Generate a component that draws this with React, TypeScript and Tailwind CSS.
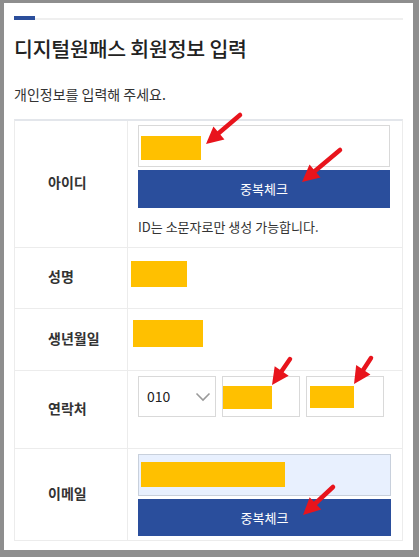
import React from "react";

type Pt = [number, number];

function Arrow({ tail, tip }: { tail: Pt; tip: Pt }) {
  const dx = tip[0] - tail[0];
  const dy = tip[1] - tail[1];
  const len = Math.sqrt(dx * dx + dy * dy);
  const ux = dx / len;
  const uy = dy / len;
  const headLen = 17;
  const halfW = 8.5;
  const bx = tip[0] - ux * headLen;
  const by = tip[1] - uy * headLen;
  const px = -uy;
  const py = ux;
  const p1 = `${tip[0]},${tip[1]}`;
  const p2 = `${bx + px * halfW},${by + py * halfW}`;
  const p3 = `${bx - px * halfW},${by - py * halfW}`;
  return (
    <g>
      <line
        x1={tail[0]}
        y1={tail[1]}
        x2={bx + ux * 2}
        y2={by + uy * 2}
        stroke="#e8141c"
        strokeWidth={4.5}
        strokeLinecap="round"
      />
      <polygon points={`${p1} ${p2} ${p3}`} fill="#e8141c" />
    </g>
  );
}

function Label({ children }: { children: React.ReactNode }) {
  return (
    <div className="flex items-center pl-[33px] pb-[3px] border-r border-[#ececec] text-[14px] font-bold text-[#333]">
      {children}
    </div>
  );
}

function Yellow({ className }: { className: string }) {
  return <div className={`bg-[#ffc000] ${className}`} />;
}

export default function App() {
  return (
    <div
      className="relative w-[419px] h-[557px] bg-[#8e8e8e] pt-[3px] pl-[4px] overflow-hidden"
      style={{ fontFamily: '"Noto Sans CJK KR", "Noto Sans", sans-serif' }}
    >
      <div className="w-[409px] h-[547px] bg-white px-[10px] pt-[12px]">
        <div className="flex items-end h-[5px]">
          <div className="w-[21px] h-[4px] bg-[#2b4e9b]" />
          <div className="flex-1 h-[2px] bg-[#efefef]" />
        </div>
        <div className="mt-[14px] text-[20.5px] leading-[28px] font-medium text-[#222] tracking-[-0.2px]">
          디지털원패스 회원정보 입력
        </div>
        <div className="mt-[22px] text-[14px] leading-[20px] text-[#333]">
          개인정보를 입력해 주세요.
        </div>
        <div className="mt-[15px] border-t-2 border-t-[#e3e6eb] border-x border-x-[#ececec]">
          {/* 아이디 */}
          <div className="grid grid-cols-[113px_1fr] h-[127px] border-b border-[#ececec]">
            <Label>아이디</Label>
            <div className="pl-[10px] pr-[12px] pt-[4px]">
              <div className="h-[42px] border border-[#d9d9d9] pl-[2px] pt-[10px]">
                <Yellow className="w-[60px] h-[24px]" />
              </div>
              <div className="mt-[3px] h-[38px] bg-[#2a4e9c] flex items-center justify-center text-white text-[13px]">
                중복체크
              </div>
              <div className="mt-[9px] text-[13px] leading-[20px] text-[#333]">
                ID는 소문자로만 생성 가능합니다.
              </div>
            </div>
          </div>
          {/* 성명 */}
          <div className="grid grid-cols-[113px_1fr] h-[61px] border-b border-[#ececec]">
            <Label>성명</Label>
            <div className="pl-[3px] pt-[13px]">
              <Yellow className="w-[56px] h-[26px]" />
            </div>
          </div>
          {/* 생년월일 */}
          <div className="grid grid-cols-[113px_1fr] h-[62px] border-b border-[#ececec]">
            <Label>생년월일</Label>
            <div className="pl-[5px] pt-[11px]">
              <Yellow className="w-[70px] h-[27px]" />
            </div>
          </div>
          {/* 연락처 */}
          <div className="grid grid-cols-[113px_1fr] h-[78px] border-b border-[#ececec]">
            <Label>연락처</Label>
            <div className="pl-[10px] pt-[5px] flex gap-[6px] items-start">
              <div className="w-[78px] h-[41px] border border-[#d9d9d9] flex items-center justify-between pl-[8px] pr-[4px]">
                <span className="text-[14px] text-[#222]">010</span>
                <svg width="16" height="10" viewBox="0 0 16 10" fill="none">
                  <path d="M1.5 1.5 L8 8 L14.5 1.5" stroke="#9a9a9a" strokeWidth="1.6" />
                </svg>
              </div>
              <div className="w-[78px] h-[41px] border border-[#d9d9d9] pt-[9px]">
                <Yellow className="w-[49px] h-[23px]" />
              </div>
              <div className="w-[78px] h-[41px] border border-[#d9d9d9] pl-[3px] pt-[9px]">
                <Yellow className="w-[44px] h-[22px]" />
              </div>
            </div>
          </div>
          {/* 이메일 */}
          <div className="grid grid-cols-[113px_1fr] h-[92px] border-b border-[#ececec]">
            <Label>이메일</Label>
            <div className="pl-[10px] pr-[11px] pt-[5px]">
              <div className="h-[42px] bg-[#e8f0fe] border border-[#c8d0dc] pl-[2px] pt-[7px]">
                <Yellow className="w-[144px] h-[25px]" />
              </div>
              <div className="mt-[3px] h-[37px] bg-[#2a4e9c] flex items-center justify-center text-white text-[13px]">
                중복체크
              </div>
            </div>
          </div>
        </div>
      </div>
      <svg
        className="absolute left-0 top-0 pointer-events-none"
        width="419"
        height="557"
        viewBox="0 0 419 557"
      >
        <Arrow tail={[240, 115]} tip={[206, 144]} />
        <Arrow tail={[340, 150]} tip={[302, 182]} />
        <Arrow tail={[290, 359]} tip={[272, 385]} />
        <Arrow tail={[371, 358]} tip={[354, 384]} />
        <Arrow tail={[333, 487]} tip={[303, 515]} />
      </svg>
    </div>
  );
}
